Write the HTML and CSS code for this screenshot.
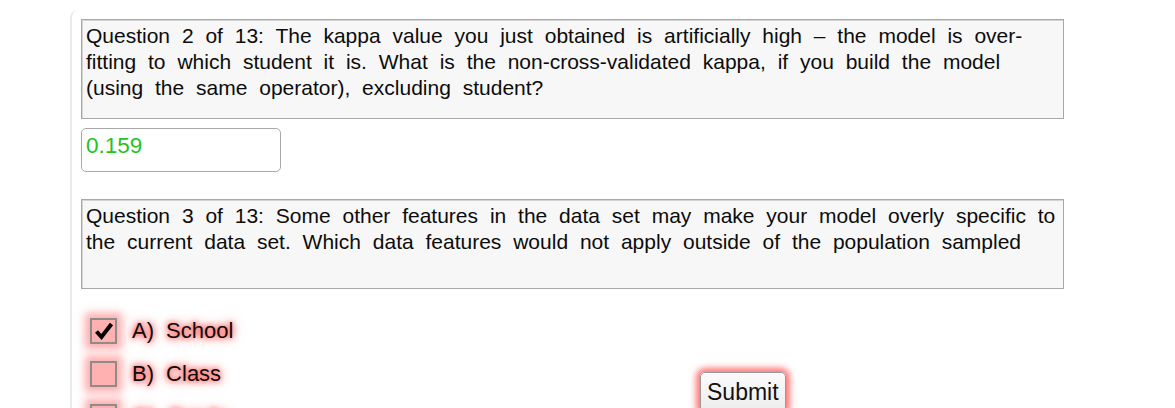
FILE: index.html
```html
<!DOCTYPE html>
<html>
<head>
<meta charset="utf-8">
<link rel="stylesheet" href="styles.css">
</head>
<body>
<div class="panel">
  <div class="question q2">Question 2 of 13: The kappa value you just obtained is artificially high – the model is over-fitting to which student it is. What is the non-cross-validated kappa, if you build the model (using the same operator), excluding student?</div>
  <div class="answer">0.159</div>
  <div class="question q3">Question 3 of 13: Some other features in the data set may make your model overly specific to the current data set. Which data features would not apply outside of the population sampled</div>
  <div class="bottom">
    <div class="options">
      <div class="option">
        <span class="box"><svg width="22" height="20" viewBox="0 0 22 20"><path d="M3.5 10.5 L8.5 16 L18.5 3" fill="none" stroke="#000" stroke-width="4" stroke-linejoin="miter"/></svg></span>
        <span class="label">A) School</span>
      </div>
      <div class="option">
        <span class="box"></span>
        <span class="label">B) Class</span>
      </div>
      <div class="option">
        <span class="box"></span>
        <span class="label">C) Grade</span>
      </div>
    </div>
    <button class="submit">Submit</button>
  </div>
</div>
</body>
</html>
```

FILE: styles.css
```css
html, body {
  margin: 0;
  padding: 0;
  background: #fff;
  overflow: hidden;
}
body {
  width: 1175px;
  height: 408px;
  font-family: "Liberation Sans", Arial, sans-serif;
  color: #111;
}
.panel {
  margin-left: 70px;
  margin-top: 10px;
  padding: 9px 0 0 9px;
  border-left: 2px solid #e9e9e9;
  border-top-left-radius: 8px;
  width: 1000px;
  height: 398px;
  overflow: hidden;
  box-sizing: border-box;
}
.question {
  width: 983px;
  box-sizing: border-box;
  border: 1px solid #a8a8a8;
  box-shadow: inset 1px 1px 0 #d4d4d4;
  background: #f7f7f7;
  padding: 3px 4px;
  font-size: 21px;
  line-height: 26px;
  word-spacing: 6px;
  color: #0c0c0c;
}
.q2 { height: 100px; }
.q3 { height: 90px; margin-top: 27px; }
.answer {
  margin-top: 9px;
  width: 200px;
  height: 44px;
  box-sizing: border-box;
  border: 1.5px solid #a9a9a9;
  border-radius: 5px;
  padding: 4px 4px;
  color: #1fc41f;
  font-size: 22.5px;
  line-height: 26px;
}
.bottom {
  display: flex;
  margin-top: 29px;
}
.options {
  display: flex;
  flex-direction: column;
  gap: 17px;
  padding-left: 9px;
  width: 610px;
}
.option {
  display: flex;
  align-items: center;
  height: 26px;
}
.box {
  width: 27px;
  height: 26px;
  box-sizing: border-box;
  border: 2px solid #8c8c8c;
  background: #ffb0b0;
  box-shadow: 0 0 8px 5px rgba(255, 90, 90, 0.5);
  display: flex;
  align-items: center;
  justify-content: center;
}
.box svg { display: block; }
.label {
  margin-left: 15px;
  font-size: 22px;
  word-spacing: 6px;
  color: #0c0c0c;
  text-shadow: 0 0 5px rgba(255, 60, 60, 0.9), 0 0 9px rgba(255, 80, 80, 0.8), 0 0 12px rgba(255, 110, 110, 0.6);
}
.submit {
  align-self: flex-start;
  margin-top: 54px;
  font-family: "Liberation Sans", Arial, sans-serif;
  font-size: 23px;
  color: #111;
  height: 40px;
  padding: 0 6px;
  border: 1.5px solid #9a9a9a;
  border-radius: 5px;
  background: linear-gradient(#fbfbfb, #ececec);
  box-shadow: 0 0 6px 4px rgba(255, 60, 60, 0.7);
}
```
